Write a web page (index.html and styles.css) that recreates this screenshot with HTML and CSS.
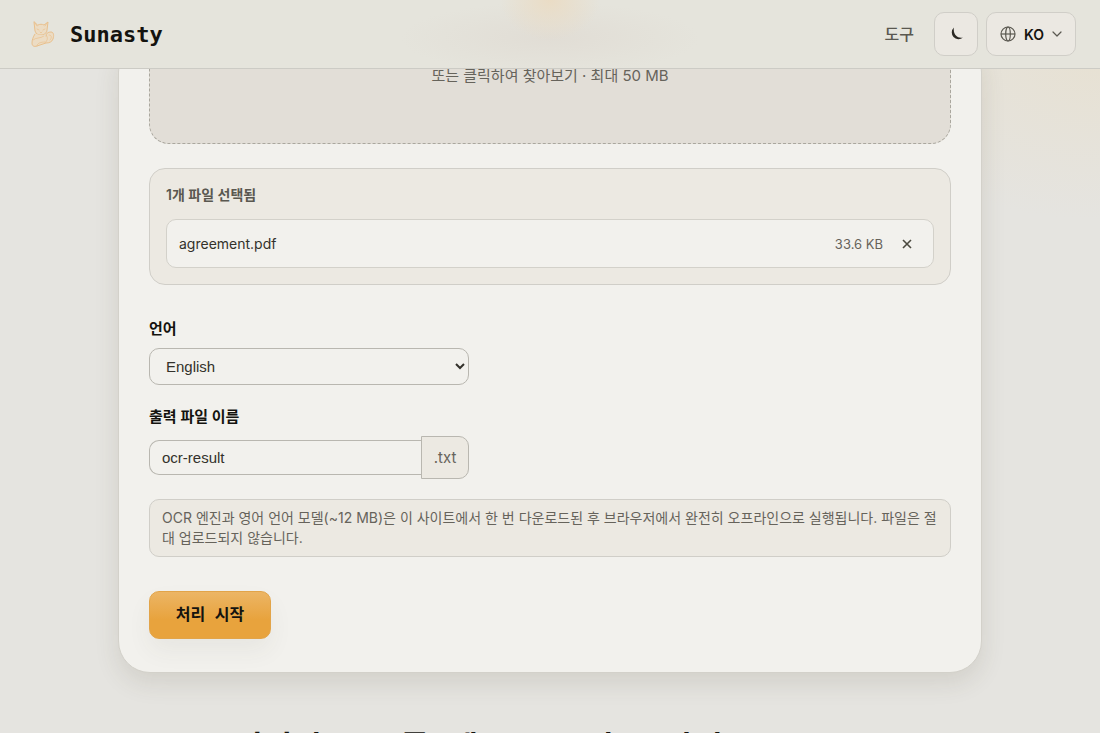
FILE: index.html
```
<!DOCTYPE html>
<html lang="ko">
<head>
    <meta charset="UTF-8">
    <meta name="viewport" content="width=device-width, initial-scale=1.0">
    <title>Sunasty | OCR</title>
    <link rel="stylesheet" href="styles.css">
</head>
<body>

    <header class="header">
        <a class="brand" href="#">
            <svg class="brand-logo" width="28" height="28" viewBox="0 0 28 28" fill="none" stroke="#e9c08c" stroke-width="1" stroke-linejoin="round" stroke-linecap="round">
                <path d="M6 2l1 9c1 3 3 4 6 4s6-2 6-5l1-8-4 3c-2-1-4-1-6 0z" fill="#ecdcc4"/>
                <path d="M7 3l2 3M19 3l-2 3M9 9l2 1M17 9l-2 1M12 12l1 1 1-1" stroke-width="0.7"/>
                <path d="M7 14c-2 3-3 6-3 9 0 3 2 4 5 3l9-3c3 0 6-1 7-4s1-7-2-7-5 1-5 4" fill="#ecdcc4"/>
                <path d="M5 20c3-3 7-1 11-4M9 26c0-3 4-4 8-4M18 15c2 2 2 5-1 8M21 15c3 0 3 3 1 5" stroke-width="0.7"/>
            </svg>
            <span>Sunasty</span>
        </a>
        <nav class="nav">
            <a class="nav-link" href="#">도구</a>
            <button class="header-btn theme-btn" type="button" aria-label="테마 전환">
                <svg width="16" height="16" viewBox="0 0 16 16" fill="#2b2924">
                    <path d="M6 1.5A6.2 6.2 0 1 0 15 11.5C10 13 4.5 8.500 6 1.500z"/>
                </svg>
            </button>
            <button class="header-btn lang-btn" type="button">
                <svg width="16" height="16" viewBox="0 0 16 16" fill="none" stroke="#5a5850" stroke-width="1.2">
                    <circle cx="8" cy="8" r="7"/>
                    <ellipse cx="8" cy="8" rx="2.3" ry="7"/>
                    <path d="M1 8h14"/>
                </svg>
                <span>KO</span>
                <svg width="10" height="10" viewBox="0 0 10 10" fill="none" stroke="#5a5850" stroke-width="1.2" stroke-linecap="round" stroke-linejoin="round">
                    <path d="M1 3l4 4 4-4"/>
                </svg>
            </button>
        </nav>
    </header>

    <main class="container">
        <form class="card">
            <div class="dropzone">
                <p>또는 클릭하여 찾아보기 · 최대 50 MB</p>
            </div>

            <div class="files">
                <p class="files-title">1개 파일 선택됨</p>
                <div class="file">
                    <span class="file-name">agreement.pdf</span>
                    <span class="file-size">33.6 KB</span>
                    <button class="remove-btn" type="button" aria-label="파일 제거">
                        <svg width="10" height="10" viewBox="0 0 10 10" fill="none" stroke="#4b493f" stroke-width="1.6">
                            <path d="M1 1l8 8M9 1l-8 8"/>
                        </svg>
                    </button>
                </div>
            </div>

            <div class="field">
                <label for="language">언어</label>
                <select id="language">
                    <option>English</option>
                </select>
            </div>

            <div class="field">
                <label for="filename">출력 파일 이름</label>
                <div class="filename">
                    <input type="text" id="filename" value="ocr-result" autocomplete="off">
                    <span class="suffix">.txt</span>
                </div>
            </div>

            <p class="note">OCR 엔진과 영어 언어 모델(~12 MB)은 이 사이트에서 한 번 다운로드된 후 브라우저에서 완전히 오프라인으로 실행됩니다. 파일은 절대 업로드되지 않습니다.</p>

            <button class="start-btn" type="button">처리 시작</button>
        </form>

        <h2>OCR — 이미지 소스를 텍스트로 작동 방식</h2>
    </main>

</body>
</html>
```
FILE: styles.css
```
* {
    box-sizing: border-box;
    margin: 0;
}

body {
    height: 100vh;
    overflow: hidden;
    font-family: Inter, "Noto Sans CJK KR", sans-serif;
    font-size: 14px;
    color: #14130f;
    background-color: #e5e4e0;
    background-image: radial-gradient(ellipse 260px 160px at 100% 60px, #e7e1d3, transparent);
}

button, input, select {
    font-family: inherit;
    color: inherit;
}

.header {
    position: relative;
    z-index: 1;
    display: flex;
    align-items: center;
    justify-content: space-between;
    height: 69px;
    padding: 0 24px 0 28px;
    border-bottom: 1px solid #cccbc5;
    background-color: #e5e4dc;
    background-image:
        radial-gradient(ellipse 50px 40px at 50% 0, #eadcc5, transparent),
        radial-gradient(ellipse 150px 36px at 50% 38px, #e1ddd5, transparent);
}

.brand {
    display: flex;
    align-items: center;
    gap: 14px;
    font-family: "DejaVu Sans Mono", monospace;
    font-size: 22px;
    font-weight: bold;
    color: #14130f;
    text-decoration: none;
}

.nav {
    display: flex;
    align-items: center;
    gap: 8px;
}

.nav-link {
    margin-right: 12px;
    font-size: 16px;
    font-weight: 500;
    line-height: 20px;
    color: #5a5850;
    text-decoration: none;
}

.header-btn {
    display: flex;
    align-items: center;
    justify-content: center;
    gap: 8px;
    height: 44px;
    padding: 0;
    border: 1px solid #d0cec8;
    border-radius: 10px;
    background-color: #ebe8e2;
    font-size: 14px;
    font-weight: 600;
    cursor: pointer;
}

.theme-btn {
    width: 44px;
}

.lang-btn {
    width: 90px;
}

.container {
    max-width: 864px;
    margin: -29px auto 0;
}

.card {
    padding: 0 30px 33px;
    border: 1px solid #d3d1ca;
    border-radius: 32px;
    background-color: #f2f1ed;
    box-shadow: 0 10px 24px rgba(70, 65, 45, 0.12);
}

.dropzone {
    height: 103px;
    padding-top: 24px;
    border: 1px dashed #aaa79e;
    border-top: none;
    border-radius: 0 0 20px 20px;
    background-color: #e2ded7;
    text-align: center;
    font-size: 15px;
    line-height: 22px;
    color: #66635b;
}

.files {
    margin-top: 24px;
    padding: 16px;
    border: 1px solid #d0cec8;
    border-radius: 16px;
    background-color: #ece9e2;
}

.files-title {
    margin-bottom: 14px;
    font-size: 14px;
    font-weight: 600;
    line-height: 20px;
    color: #5a5850;
}

.file {
    display: flex;
    align-items: center;
    height: 49px;
    padding: 0 12px;
    border: 1px solid #d3d1ca;
    border-radius: 10px;
    background-color: #f2f1ed;
}

.file-name {
    flex: 1;
    color: #33312b;
}

.file-size {
    font-size: 13px;
    color: #66635b;
}

.remove-btn {
    display: flex;
    align-items: center;
    justify-content: center;
    width: 28px;
    height: 28px;
    margin-left: 10px;
    padding: 0;
    border: none;
    background: none;
    cursor: pointer;
}

.field {
    margin-top: 20px;
}

.files + .field {
    margin-top: 32px;
}

.field label {
    display: block;
    margin-bottom: 7px;
    font-size: 15px;
    font-weight: 600;
    line-height: 24px;
}

.field select {
    display: block;
    width: 320px;
    height: 37px;
    padding: 0 12px;
    border: 1px solid #b9b7b0;
    border-radius: 10px;
    background-color: #f2f1ed;
    font-family: "Liberation Sans", sans-serif;
    font-size: 15px;
    color: #33312b;
}

.filename {
    display: flex;
    align-items: center;
    width: 320px;
}

.filename input {
    flex: 1;
    min-width: 0;
    height: 35px;
    padding: 0 12px;
    border: 1px solid #b9b7b0;
    border-right: none;
    border-radius: 10px 0 0 10px;
    background-color: #f2f1ed;
    font-family: "Liberation Sans", sans-serif;
    font-size: 15px;
    color: #33312b;
}

.suffix {
    width: 48px;
    height: 43px;
    border: 1px solid #b9b7b0;
    border-radius: 0 10px 10px 0;
    background-color: #ece9e2;
    text-align: center;
    font-size: 15px;
    line-height: 41px;
    color: #66635b;
}

.note {
    margin-top: 20px;
    padding: 8px 12px;
    border: 1px solid #d0cec8;
    border-radius: 10px;
    background-color: #ece9e2;
    font-size: 14px;
    line-height: 20px;
    color: #66635b;
}

.start-btn {
    display: block;
    width: 122px;
    height: 48px;
    margin-top: 34px;
    border: 1px solid #e2a449;
    border-radius: 10px;
    background: linear-gradient(#ecb565, #e8a33d 60%);
    box-shadow: 0 12px 24px rgba(70, 65, 45, 0.06);
    font-family: "DejaVu Sans Mono", "Noto Sans CJK KR", monospace;
    font-size: 16px;
    font-weight: bold;
    line-height: 20px;
    cursor: pointer;
}

h2 {
    margin-top: 51px;
    font-family: "DejaVu Sans Mono", "Noto Sans CJK KR", monospace;
    font-size: 32px;
    line-height: 48px;
}
```
